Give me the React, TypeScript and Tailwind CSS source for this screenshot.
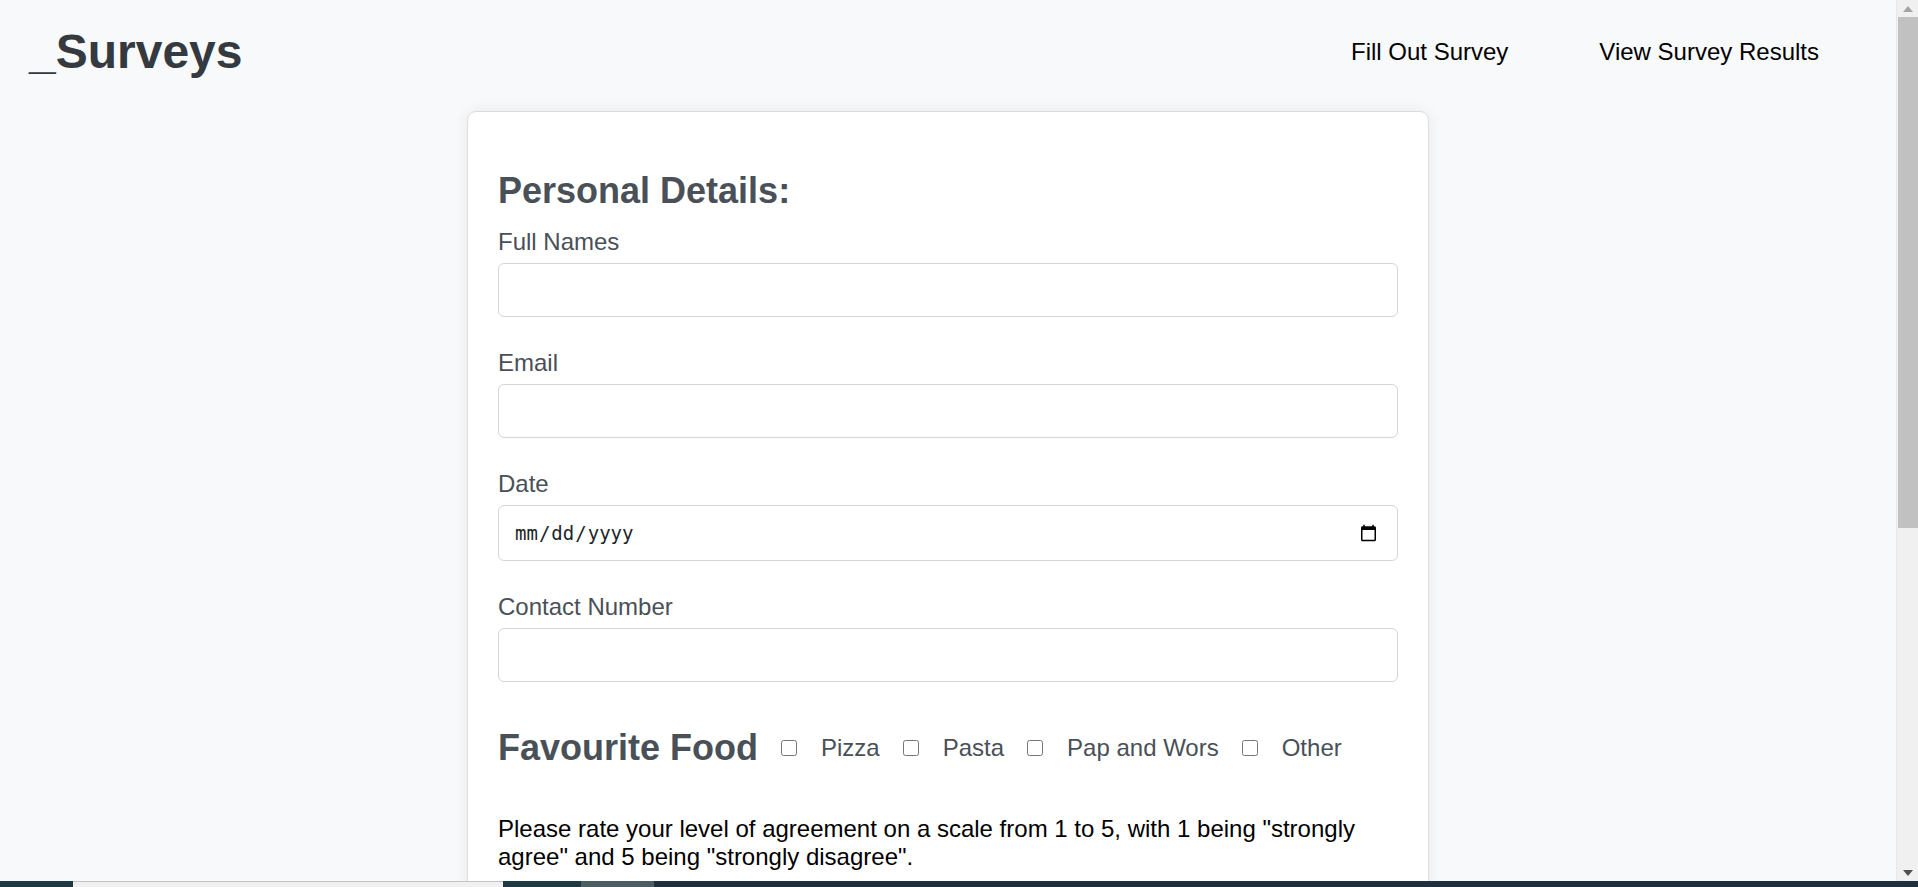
const foods = ["Pizza", "Pasta", "Pap and Wors", "Other"];

const fields = [
  { label: "Full Names", type: "text" },
  { label: "Email", type: "email" },
  { label: "Date", type: "date" },
  { label: "Contact Number", type: "tel" },
];

function FormField({ label, type, last }: { label: string; type: string; last: boolean }) {
  const isDate = type === "date";
  return (
    <div className={last ? "" : "mb-[32px]"}>
      <label className="block text-[24px] leading-[28px] mb-[7px] text-[#495057]">{label}</label>
      <input
        type={type}
        className={`block w-full ${isDate ? "h-[56px] pl-[15px] pr-[17px]" : "h-[54px] px-[17px]"} border border-[#d3d6d9] rounded-[6px] bg-white text-[19px] text-[#212529] outline-none ${
          isDate ? "font-['DejaVu_Sans_Mono',monospace]" : ""
        }`}
      />
    </div>
  );
}

function FakeScrollbar() {
  return (
    <div className="w-[22px] h-full bg-[#f0f0f0] border-l border-[#e8e8e8] flex flex-col">
      <div className="h-[17px] flex items-center justify-center">
        <svg width="10" height="6" viewBox="0 0 10 6">
          <path d="M0 6 L5 0 L10 6 Z" fill="#a3a3a3" />
        </svg>
      </div>
      <div className="h-[511px] bg-[#c1c1c1] ml-[1px]" />
      <div className="flex-1" />
      <div className="h-[17px] flex items-center justify-center">
        <svg width="10" height="6" viewBox="0 0 10 6">
          <path d="M0 0 L10 0 L5 6 Z" fill="#505050" />
        </svg>
      </div>
    </div>
  );
}

export default function App() {
  return (
    <div className="h-[887px] w-full overflow-hidden flex flex-col bg-[#f8f9fa] font-['Liberation_Sans',Arial,sans-serif]">
      <div className="flex-1 flex min-h-0">
        <div className="flex-1 min-w-0 overflow-hidden">
          {/* header */}
          <header className="h-[100px] pt-[4px] flex items-center justify-between pl-[29px] pr-[77px]">
            <h1 className="text-[48px] font-bold leading-[58px] text-[#343a40]">_Surveys</h1>
            <nav className="flex items-center gap-[91px] text-[24px] text-black">
              <a href="#">Fill Out Survey</a>
              <a href="#">View Survey Results</a>
            </nav>
          </header>

          <section className="mt-[11px] mx-auto w-[962px] bg-white border border-[#dcdcdc] rounded-[9px] shadow-[0_0_16px_rgba(0,0,0,0.07)] px-[30px] pt-[57px] pb-[40px]">
            <h2 className="text-[36px] font-bold leading-[43px] mb-[16px] text-[#495057]">Personal Details:</h2>

            {fields.map((f, i) => (
              <FormField key={f.label} label={f.label} type={f.type} last={i === fields.length - 1} />
            ))}

            <div className="mt-[44px] flex items-center text-[#495057]">
              <h2 className="text-[36px] font-bold leading-[43px]">Favourite Food</h2>
              {foods.map((food) => (
                <label key={food} className="flex items-center text-[24px]">
                  <input type="checkbox" className="m-0 ml-[23px] w-4 h-4" />
                  <span className="ml-[24px]">{food}</span>
                </label>
              ))}
            </div>

            <p className="mt-[46px] text-[24px] leading-[28px] text-black">
              Please rate your level of agreement on a scale from 1 to 5, with 1 being "strongly agree" and 5 being
              "strongly disagree".
            </p>

            <table className="mt-[30px] w-full text-[24px] text-black">
              <tbody>
                <tr>
                  <td className="py-2">I like to watch movies</td>
                  <td className="py-2 text-center">1</td>
                  <td className="py-2 text-center">2</td>
                  <td className="py-2 text-center">3</td>
                  <td className="py-2 text-center">4</td>
                  <td className="py-2 text-center">5</td>
                </tr>
              </tbody>
            </table>
          </section>
        </div>
        <FakeScrollbar />
      </div>

      {/* taskbar strip along the bottom */}
      <div className="h-[6px] flex bg-[#1f3942]">
        <div className="w-[73px]" />
        <div className="w-[430px] bg-[#f0f0f0] border-t border-[#c4c4c4]" />
        <div className="w-[78px]" />
        <div className="w-[73px] bg-[#4a5e64]" />
        <div className="flex-1 bg-[#1e2f3e]" />
      </div>
    </div>
  );
}
